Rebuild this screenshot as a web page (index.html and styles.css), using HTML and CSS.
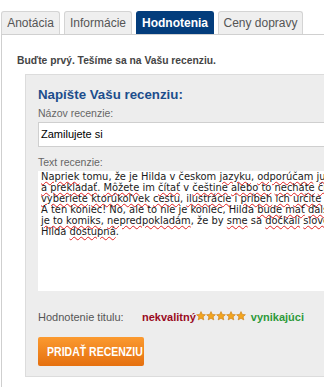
FILE: index.html
```html
<!DOCTYPE html>
<html lang="sk">
<head>
<meta charset="utf-8">
<title>Hodnotenia</title>
<link rel="stylesheet" href="styles.css">
</head>
<body>
<div class="page">
  <div class="tabs">
    <div class="tab t1">Anotácia</div>
    <div class="tab t2">Informácie</div>
    <div class="tab active">Hodnotenia</div>
    <div class="tab t4">Ceny dopravy</div>
  </div>
  <div class="panel">
    <p class="intro">Buďte prvý. Tešíme sa na Vašu recenziu.</p>
    <div class="box">
      <h2 class="title">Napíšte Vašu recenziu:</h2>
      <label class="lbl">Názov recenzie:</label>
      <div class="input">Zamilujete si</div>
      <label class="lbl lbl2">Text recenzie:</label>
      <div class="textarea"><span class="sp">Napriek</span> tomu, že je Hilda v českom <span class="sp">jazyku</span>, <span class="sp">odporúčam</span> <span class="sp">ju</span><br><span class="sp">a prekladať</span>. <span class="sp">Môžete</span> im <span class="sp">čítať</span> v <span class="sp">češtine</span> <span class="sp">alebo to</span> <span class="sp">necháte</span> <span class="sp">čítať</span><br><span class="sp">vyberiete</span> <span class="sp">ktorúkoľvek</span> <span class="sp">cestu</span>, <span class="sp">ilustrácie</span> i <span class="sp">príbeh</span> <span class="sp">ich</span> <span class="sp">určite</span><br>A ten koniec! No, ale to nie je koniec, Hilda <span class="sp">bude</span> <span class="sp">mať</span> <span class="sp">ďalšie</span><br><span class="sp">je to komiks</span>, <span class="sp">nepredpokladám</span>, že by <span class="sp">sme</span> sa <span class="sp">dočkali</span> <span class="sp">slovenského</span><br>Hilda <span class="sp">dostupná</span>.</div>
      <div class="rating">
        <span class="rlbl">Hodnotenie titulu:</span>
        <span class="bad">nekvalitný</span>
        <span class="stars">
          <svg viewBox="0 0 10 10" width="10" height="10"><path d="M5 0.6 L6.3 3.4 L9.4 3.7 L7.1 5.8 L7.8 8.9 L5 7.3 L2.2 8.9 L2.9 5.8 L0.6 3.7 L3.7 3.4 Z"/></svg><svg viewBox="0 0 10 10" width="10" height="10"><path d="M5 0.6 L6.3 3.4 L9.4 3.7 L7.1 5.8 L7.8 8.9 L5 7.3 L2.2 8.9 L2.9 5.8 L0.6 3.7 L3.7 3.4 Z"/></svg><svg viewBox="0 0 10 10" width="10" height="10"><path d="M5 0.6 L6.3 3.4 L9.4 3.7 L7.1 5.8 L7.8 8.9 L5 7.3 L2.2 8.9 L2.9 5.8 L0.6 3.7 L3.7 3.4 Z"/></svg><svg viewBox="0 0 10 10" width="10" height="10"><path d="M5 0.6 L6.3 3.4 L9.4 3.7 L7.1 5.8 L7.8 8.9 L5 7.3 L2.2 8.9 L2.9 5.8 L0.6 3.7 L3.7 3.4 Z"/></svg><svg viewBox="0 0 10 10" width="10" height="10"><path d="M5 0.6 L6.3 3.4 L9.4 3.7 L7.1 5.8 L7.8 8.9 L5 7.3 L2.2 8.9 L2.9 5.8 L0.6 3.7 L3.7 3.4 Z"/></svg>
        </span>
        <span class="good">vynikajúci</span>
      </div>
      <button class="btn"><span class="btn-text">PRIDAŤ RECENZIU</span></button>
    </div>
  </div>
</div>
</body>
</html>
```
FILE: styles.css
```css
html, body {
  margin: 0;
  padding: 0;
  overflow: hidden;
  background: #fff;
}
body {
  font-family: "Liberation Sans", Arial, sans-serif;
  width: 324px;
  height: 387px;
}
.page {
  width: 420px;
  padding-top: 11px;
  padding-left: 1px;
}
.tabs {
  display: flex;
  gap: 4px;
  height: 23px;
}
.tab {
  box-sizing: border-box;
  height: 23px;
  border: 1px solid #d4d4d4;
  border-bottom: none;
  border-radius: 3px 3px 0 0;
  background: #efefef;
  color: #555;
  font-size: 12px;
  line-height: 22px;
  text-align: center;
}
.t1 { width: 59px; }
.t2 { width: 68px; }
.active {
  width: 78px;
  background: #033d7c;
  border-color: #033d7c;
  color: #fff;
  font-weight: bold;
}
.t4 { width: 85px; }
.panel {
  border-top: 1px solid #d0d0d0;
  border-left: 1px solid #cfcfcf;
  height: 400px;
}
.intro {
  margin: 0;
  padding: 20px 0 0 15px;
  font-size: 10.3px;
  font-weight: bold;
  color: #444;
  line-height: 12px;
  height: 19px;
}
.box {
  margin-left: 23px;
  border: 1px solid #dcdcdc;
  background: #ededed;
  padding: 11px 0 0 12px;
  height: 290px;
  display: flex;
  flex-direction: column;
  align-items: flex-start;
}
.title {
  margin: 0;
  font-size: 13.3px;
  line-height: 17px;
  color: #1c4d8c;
  font-weight: bold;
}
.lbl {
  font-size: 10.5px;
  color: #666;
  line-height: 12px;
  margin-top: 4px;
}
.lbl2 {
  margin-top: 9px;
}
.input {
  margin-top: 3px;
  box-sizing: border-box;
  width: 380px;
  height: 25px;
  background: #fff;
  border: 1px solid #cfcfcf;
  padding-left: 2px;
  font-size: 11px;
  line-height: 23px;
  color: #000;
}
.textarea {
  margin-top: 3px;
  box-sizing: border-box;
  width: 380px;
  height: 120px;
  background: #fff;
  padding: 0 0 0 3px;
  font-family: "DejaVu Sans Condensed", "DejaVu Sans", Verdana, sans-serif;
  font-stretch: condensed;
  font-size: 11px;
  line-height: 11px;
  color: #1a1a1a;
  white-space: nowrap;
  overflow: hidden;
}
.sp {
  text-decoration: underline wavy #e02020;
  text-decoration-thickness: 1px;
  text-underline-offset: 1px;
}
.rating {
  margin-top: 20px;
  display: flex;
  align-items: center;
  font-size: 11px;
  line-height: 12px;
}
.rlbl {
  color: #555;
  width: 104px;
}
.bad {
  color: #9a0a1e;
  font-weight: bold;
}
.stars {
  display: flex;
  margin-top: -3px;
}
.stars svg {
  fill: #f3a51f;
  stroke: #c97a10;
  stroke-width: 0.6;
}
.good {
  color: #2e9a3a;
  font-weight: bold;
  margin-left: 5px;
}
.btn {
  margin-top: 14px;
  width: 106px;
  height: 29px;
  border: none;
  border-radius: 2px;
  background: linear-gradient(#fb9a30, #e5700f);
  color: #fff;
  font-family: "Liberation Sans", Arial, sans-serif;
  font-weight: bold;
  font-size: 12.5px;
  padding: 0;
  text-align: center;
  white-space: nowrap;
  overflow: hidden;
}
.btn-text {
  display: inline-block;
  transform: scaleX(0.84);
}
```
